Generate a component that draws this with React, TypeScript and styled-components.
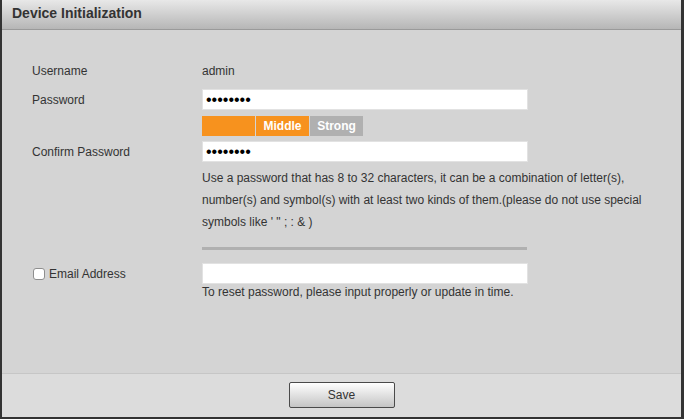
import React from "react";
import styled, { createGlobalStyle } from "styled-components";

const Global = createGlobalStyle`
  html, body { margin: 0; padding: 0; background: #d4d4d4; }
  body { font-family: "Liberation Sans", Arial, Helvetica, sans-serif; }
  * { box-sizing: border-box; }
`;

const Frame = styled.div`
  width: 684px;
  height: 419px;
  display: flex;
  flex-direction: column;
  border-left: 2px solid #333333;
  border-right: 3px solid #333333;
  border-bottom: 2px solid #333333;
  background: #d4d4d4;
  color: #333333;
`;

const Header = styled.div`
  height: 30px;
  flex: none;
  display: flex;
  align-items: center;
  padding-left: 10px;
  padding-bottom: 3px;
  background: linear-gradient(#e8e8e8, #b6b6b6);
  border-bottom: 1px solid #9a9a9a;
`;

const Title = styled.h1`
  margin: 0;
  font-size: 14px;
  font-weight: bold;
  color: #333333;
`;

const Body = styled.div`
  flex: 1;
  display: flex;
  flex-direction: column;
  padding: 30px 0 0 30px;
  font-size: 12px;
`;

const Row = styled.div<{ $gap?: number; $h?: number }>`
  display: grid;
  grid-template-columns: 170px 1fr;
  align-items: center;
  margin-top: ${(p) => p.$gap ?? 0}px;
  min-height: ${(p) => p.$h ?? 21}px;
`;

const Label = styled.label`
  font-size: 12px;
  color: #333333;
  display: flex;
  align-items: center;
`;

const Value = styled.span`
  font-size: 12px;
  color: #333333;
`;

const Field = styled.input`
  width: 326px;
  height: 21px;
  margin: 0;
  padding: 0 3px;
  border: 1px solid #e2e2e2;
  background: #ffffff;
  font-family: "Liberation Sans", Arial, sans-serif;
  font-size: 16px;
  color: #000;
  outline: none;
`;

const Strength = styled.div`
  display: flex;
  height: 20px;
`;

const Segment = styled.div<{ $on: boolean }>`
  width: 53px;
  height: 20px;
  margin-right: 1px;
  background: ${(p) => (p.$on ? "#f7921e" : "#b0b0b0")};
  color: #ffffff;
  font-weight: bold;
  font-size: 12px;
  display: flex;
  align-items: center;
  justify-content: center;
`;

const Help = styled.p`
  margin: 0;
  width: 456px;
  font-size: 12px;
  line-height: 22px;
  color: #333333;
`;

const Divider = styled.div`
  width: 325px;
  height: 3px;
  background: #b0b0b0;
`;

const Check = styled.span`
  width: 12px;
  height: 12px;
  margin: 0 4px 0 1px;
  border: 1px solid #8e8e8e;
  border-radius: 3px;
  background: #ffffff;
  display: inline-block;
`;

const Hint = styled.div`
  font-size: 12px;
  color: #333333;
  margin-top: 1px;
`;

const Footer = styled.div`
  height: 44px;
  flex: none;
  border-top: 1px solid #c6c6c6;
  background: #dcdcdc;
  display: flex;
  justify-content: center;
  padding-top: 8px;
`;

const SaveButton = styled.button`
  width: 106px;
  height: 26px;
  border: 1px solid #4a4a4a;
  border-radius: 2px;
  background: linear-gradient(#ffffff, #c4c4c4);
  font-family: "Liberation Sans", Arial, sans-serif;
  font-size: 12px;
  color: #333333;
  padding: 0;
`;

export default function App() {
  return (
    <>
      <Global />
      <Frame>
        <Header>
          <Title>Device Initialization</Title>
        </Header>
        <Body>
          <Row>
            <Label>Username</Label>
            <Value>admin</Value>
          </Row>
          <Row $gap={8}>
            <Label>Password</Label>
            <Field type="password" defaultValue="abcd1234" readOnly />
          </Row>
          <Row $gap={6} $h={20}>
            <span />
            <Strength>
              <Segment $on />
              <Segment $on>Middle</Segment>
              <Segment $on={false}>Strong</Segment>
            </Strength>
          </Row>
          <Row $gap={5}>
            <Label>Confirm Password</Label>
            <Field type="password" defaultValue="abcd1234" readOnly />
          </Row>
          <Row $gap={5}>
            <span />
            <Help>
              Use a password that has 8 to 32 characters, it can be a combination of letter(s),
              number(s) and symbol(s) with at least two kinds of them.(please do not use special
              symbols like ' " ; : &amp; )
            </Help>
          </Row>
          <Row $gap={14} $h={3}>
            <span />
            <Divider />
          </Row>
          <Row $gap={13}>
            <Label>
              <Check />
              Email Address
            </Label>
            <Field type="text" defaultValue="" readOnly />
          </Row>
          <Row $h={14}>
            <span />
            <Hint>To reset password, please input properly or update in time.</Hint>
          </Row>
        </Body>
        <Footer>
          <SaveButton>Save</SaveButton>
        </Footer>
      </Frame>
    </>
  );
}
